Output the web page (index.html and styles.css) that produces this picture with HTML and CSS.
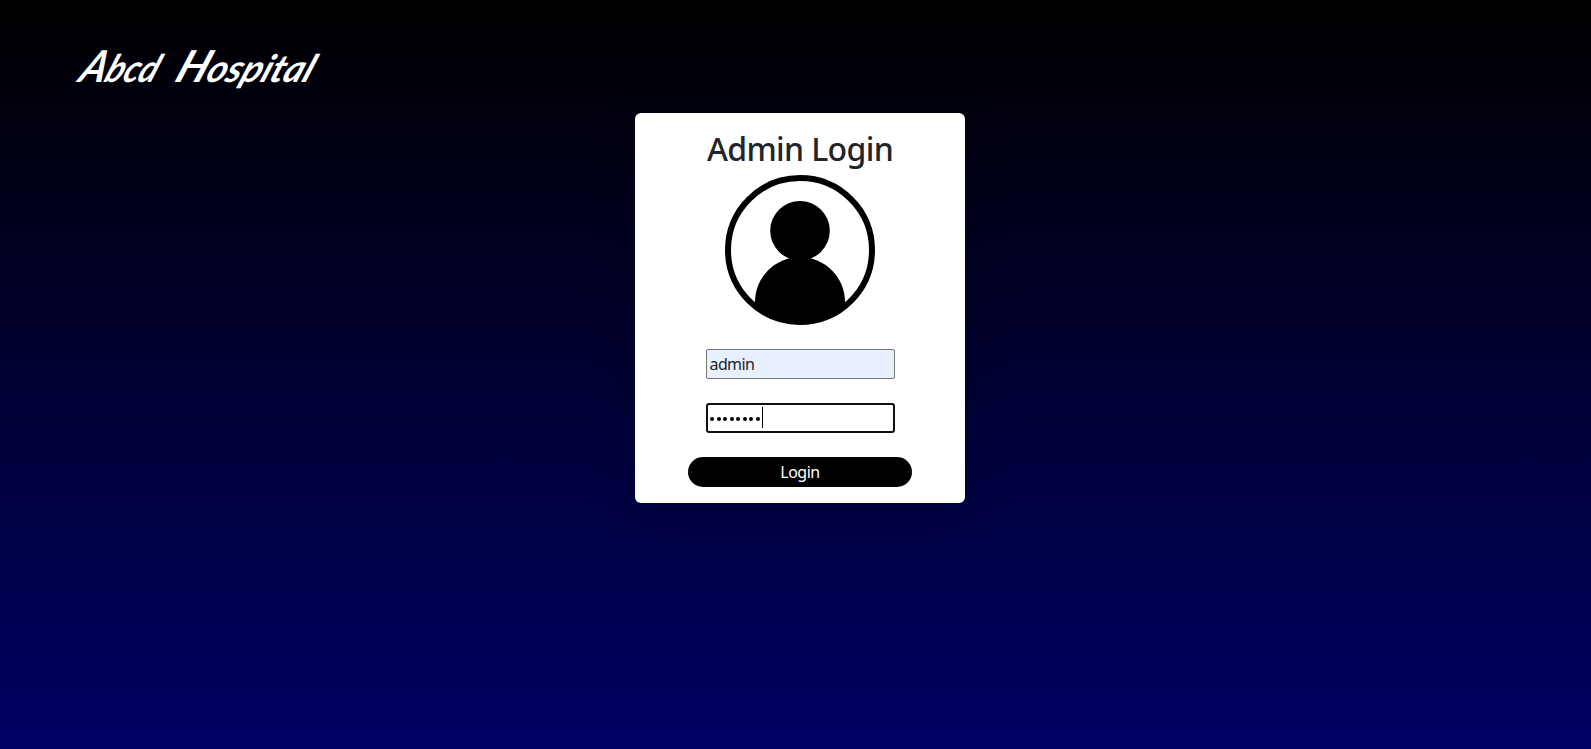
FILE: index.html
```html
<!DOCTYPE html>
<html lang="en">
<head>
<meta charset="utf-8">
<title>Admin Login</title>
<link rel="stylesheet" href="styles.css">
</head>
<body>
<header class="header">
  <svg class="brand" width="320" height="60" viewBox="0 0 320 60" role="img" aria-label="Abcd Hospital">
    <g transform="skewX(-22)">
      <text class="brand-text" x="25" y="42" textLength="77" lengthAdjust="spacingAndGlyphs"><tspan class="brand-cap">A</tspan>bcd</text>
      <text class="brand-text" x="121" y="42" textLength="136" lengthAdjust="spacingAndGlyphs"><tspan class="brand-cap">H</tspan>ospital</text>
    </g>
  </svg>
</header>
<main class="card">
  <h2 class="title">Admin Login</h2>
  <svg class="avatar" viewBox="0 0 150 150" aria-hidden="true">
    <defs><clipPath id="ring"><circle cx="75" cy="75" r="74"/></clipPath></defs>
    <circle cx="75" cy="75" r="72" fill="none" stroke="#000" stroke-width="6"/>
    <circle cx="75" cy="55.7" r="29.8"/>
    <path clip-path="url(#ring)" d="M30 150V127a45 45 0 0 1 90 0v23z"/>
  </svg>
  <form class="form">
    <div class="field field-filled">admin</div>
    <div class="field field-focus"><span class="dots"><i></i><i></i><i></i><i></i><i></i><i></i><i></i><i></i></span><span class="caret"></span></div>
    <button class="submit" type="button">Login</button>
  </form>
</main>
</body>
</html>
```
FILE: styles.css
```css
* { box-sizing: border-box; }
body {
  margin: 0;
  height: 749px;
  overflow: hidden;
  padding-left: 9px;
  background: linear-gradient(#000, #000064);
  font-family: "Segoe UI", "Noto Sans", sans-serif;
  font-size: 16px;
  line-height: 24px;
  color: #212529;
}
.header { height: 113px; padding: 40px 0 0 60px; }
.brand { display: block; overflow: visible; }
.brand-text {
  font-family: "Brush Script MT", Lato, cursive;
  font-style: italic;
  font-weight: 700;
  font-size: 38px;
  fill: #fff;
}
.brand-cap { font-size: 44px; }
.card {
  width: 330px;
  height: 390px;
  margin: 0 auto;
  padding: 16px 0;
  border-radius: 6px;
  background: #fff;
  box-shadow: 0 16px 48px rgba(0, 0, 0, .175);
  display: flex;
  flex-direction: column;
  align-items: center;
}
.title {
  margin: 0 0 8px;
  height: 38px;
  padding-top: 1px;
  font-size: 32px;
  line-height: 38px;
  font-weight: 500;
  letter-spacing: -.65px;
  white-space: nowrap;
}
.avatar { width: 150px; height: 150px; flex: none; }
.form { width: 224px; margin-top: 24px; display: flex; flex-direction: column; gap: 24px; align-items: center; }
.field {
  width: 189px;
  height: 30px;
  margin-left: 1px;
  padding: 2px 2.5px;
  border: 1px solid #767676;
  border-radius: 2px;
  background: #fff;
  color: #212529;
  letter-spacing: -.6px;
  display: flex;
  align-items: center;
}
.field-filled { background: #e8f0fe; }
.field-focus { border: 2px solid #101010; border-radius: 3px; padding: 2px; }
.dots { display: flex; gap: 2.5px; margin: 2px 0 0; }
.dots i { width: 4px; height: 4px; border-radius: 50%; background: #000; }
.caret { width: 1px; height: 21px; margin: -2px 0 0 2.5px; background: #000; }
.submit {
  width: 224px;
  height: 30px;
  padding: 0;
  border: 0;
  border-radius: 15px;
  background: #000;
  color: #fff;
  font: inherit;
  letter-spacing: -.5px;
}
```
